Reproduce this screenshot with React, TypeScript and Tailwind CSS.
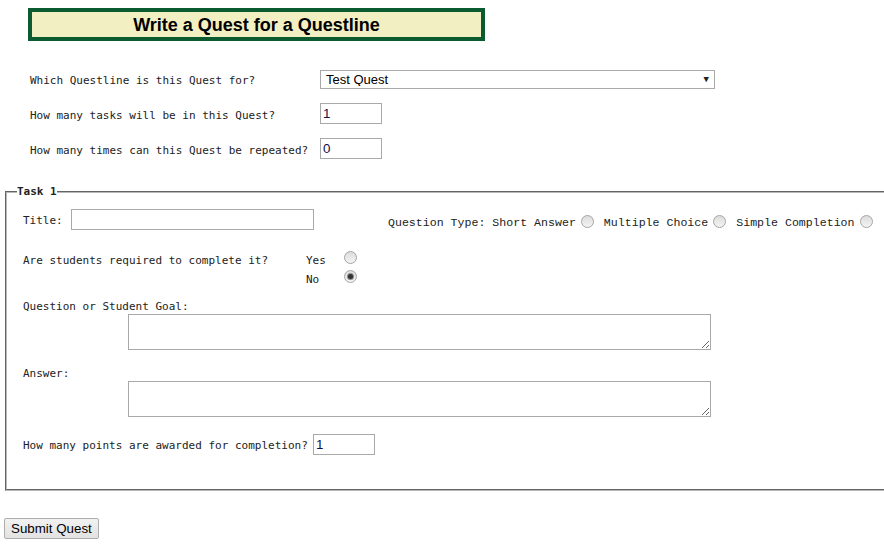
import { useState } from "react";

const mono = "font-['DejaVu_Sans_Mono',monospace]";
const courier = "font-['Liberation_Mono','Courier_New',monospace]";
const arial = "font-['Liberation_Sans',Arial,sans-serif]";

function Radio({ checked = false, className = "" }: { checked?: boolean; className?: string }) {
  return (
    <span
      className={`inline-flex h-[13px] w-[13px] shrink-0 items-center justify-center rounded-full border border-[#a5a5a5] bg-gradient-to-b from-[#dcdcdc] to-[#f4f4f4] ${className}`}
    >
      {checked && <span className="h-[5px] w-[5px] rounded-full bg-[#333] shadow-[0_0_0_1px_#8a8a8a]" />}
    </span>
  );
}

const inputCls = `h-[21px] border border-[#a9a9a9] bg-white px-[2px] text-[13.33px] text-[#10104a] outline-none ${arial}`;

export default function App() {
  const [questline, setQuestline] = useState("Test Quest");

  return (
    <div className="h-[545px] w-[884px] overflow-hidden bg-white text-black">
      {/* title banner */}
      <div className="pl-[28px] pt-[8px]">
        <div className="flex h-[33px] w-[457px] items-center justify-center border-4 border-[#0c5a2f] bg-[#f2efc2]">
          <h1 className={`text-[18px] font-bold leading-none ${arial}`}>Write a Quest for a Questline</h1>
        </div>
      </div>

      {/* questline settings */}
      <div className={`flex flex-col gap-[14px] pl-[30px] pt-[29px] text-[11px] leading-[13px] text-[#222] ${mono}`}>
        <div className="flex items-center">
          <label className="w-[290px] pt-[2px]">Which Questline is this Quest for?</label>
          <div className="relative h-[19px] w-[395px]">
            <select
              value={questline}
              onChange={(e) => setQuestline(e.target.value)}
              className={`h-full w-full appearance-none border border-[#a9a9a9] bg-white pl-[5px] text-[13px] leading-none text-black outline-none ${arial}`}
            >
              <option>Test Quest</option>
            </select>
            <span className="pointer-events-none absolute right-[6px] top-[5px] text-[9px] leading-none">▼</span>
          </div>
        </div>
        <div className="flex items-center">
          <label className="w-[290px] pt-[3px]">How many tasks will be in this Quest?</label>
          <input className={`${inputCls} w-[62px]`} defaultValue="1" />
        </div>
        <div className="flex items-center">
          <label className="w-[290px] pt-[3px]">How many times can this Quest be repeated?</label>
          <input className={`${inputCls} w-[62px]`} defaultValue="0" />
        </div>
      </div>

      {/* task fieldset */}
      <fieldset className="ml-[5px] mt-[26px] h-[306px] w-[900px] border-2 border-[#b8b8b8] px-[10px] [border-style:groove]">
        <legend className={`text-[11px] font-bold leading-[13px] text-[#222] ${mono}`}>Task 1</legend>

        <div className={`pl-[6px] pt-[11px] text-[11px] leading-[13px] text-[#222] ${mono}`}>
          <div className="flex items-center">
            <label className="w-[48px] pt-[1px]">Title:</label>
            <input className={`${inputCls} w-[243px]`} />
            <div className={`ml-[74px] mt-[6px] flex items-center text-[11.6px] ${courier}`}>
              <span>Question Type: Short Answer</span>
              <Radio className="ml-[5px] mr-[10px] -mt-[2px]" />
              <span>Multiple Choice</span>
              <Radio className="ml-[5px] mr-[10px] -mt-[2px]" />
              <span>Simple Completion</span>
              <Radio className="ml-[5px] -mt-[2px]" />
            </div>
          </div>

          <div className="mt-[24px] flex">
            <label className="w-[283px]">Are students required to complete it?</label>
            <div className="flex flex-col gap-[6px]">
              <div className="flex items-start">
                <span className="w-[38px]">Yes</span>
                <Radio className="-mt-[3px]" />
              </div>
              <div className="flex items-start">
                <span className="w-[38px]">No</span>
                <Radio checked className="-mt-[3px]" />
              </div>
            </div>
          </div>

          <div className="mt-[14px]">Question or Student Goal:</div>
          <textarea className="ml-[105px] mt-[1px] block h-[36px] w-[583px] border border-[#a9a9a9] outline-none" />

          <div className="mt-[17px]">Answer:</div>
          <textarea className="ml-[105px] mt-[1px] block h-[36px] w-[583px] border border-[#a9a9a9] outline-none" />

          <div className="mt-[17px] flex items-center">
            <label className="w-[290px] pt-[1px]">How many points are awarded for completion?</label>
            <input className={`${inputCls} w-[62px]`} defaultValue="1" />
          </div>
        </div>
      </fieldset>

      <div className="flex pl-[4px] pt-[27px]">
        <button
          type="button"
          className={`h-[21px] rounded-[2px] border border-[#adadad] bg-gradient-to-b from-[#f2f2f2] to-[#e2e2e2] px-[6px] text-[13.33px] leading-none text-black ${arial}`}
        >
          Submit Quest
        </button>
      </div>
    </div>
  );
}
